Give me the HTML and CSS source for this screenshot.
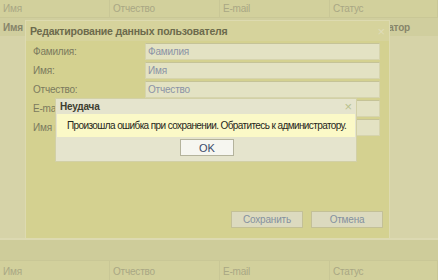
FILE: index.html
```html
<!DOCTYPE html>
<html lang="ru">
<head>
  <meta charset="UTF-8">
  <meta name="viewport" content="width=device-width, initial-scale=1.0">
  <link rel="stylesheet" href="styles.css">
</head>
<body>

<!-- таблица под окнами -->
<div class="page">
  <div class="grid-head">
    <div class="cell">Имя</div>
    <div class="cell">Отчество</div>
    <div class="cell">E-mail</div>
    <div class="cell">Статус</div>
  </div>

  <div class="panel">
    <div class="panel-head">
      <span>Имя</span>
      <span>Администратор</span>
    </div>
    <div class="panel-body"></div>
  </div>

  <div class="band"></div>

  <div class="grid-head bottom">
    <div class="cell">Имя</div>
    <div class="cell">Отчество</div>
    <div class="cell">E-mail</div>
    <div class="cell">Статус</div>
  </div>
</div>

<!-- окно редактирования -->
<div class="dialog">
  <div class="dialog-title">
    <span>Редактирование данных пользователя</span>
    <span class="close">&times;</span>
  </div>
  <div class="form">
    <label>Фамилия:</label><div class="input">Фамилия</div>
    <label>Имя:</label><div class="input">Имя</div>
    <label>Отчество:</label><div class="input">Отчество</div>
    <label>E-mail:</label><div class="input"></div>
    <label>Имя пользователя:</label><div class="input"></div>
  </div>
  <div class="dialog-buttons">
    <button class="btn">Сохранить</button>
    <button class="btn">Отмена</button>
  </div>
</div>

<!-- сообщение об ошибке -->
<div class="alert">
  <div class="alert-title">
    <span>Неудача</span>
    <span class="alert-close">&times;</span>
  </div>
  <div class="alert-msg">Произошла ошибка при сохранении. Обратитесь к администратору.</div>
  <div class="alert-buttons">
    <button class="ok">OK</button>
  </div>
</div>

</body>
</html>
```

FILE: styles.css
```css
body {
  margin: 0;
  background: #d2d09e;
  font-family: "Liberation Sans", Arial, sans-serif;
  font-size: 10px;
  letter-spacing: -0.2px;
  overflow: hidden;
}

.page {
  width: 438px;
  height: 280px;
  display: flex;
  flex-direction: column;
}

.grid-head {
  display: grid;
  grid-template-columns: 110px 110px 110px 108px;
  height: 17px;
  background: #d2d09c;
  border-bottom: 1px solid #c9c796;
  flex-shrink: 0;
}

.grid-head .cell {
  padding: 3px 0 0 3px;
  color: #a9a784;
  border-right: 1px solid #c9c796;
}

.grid-head.bottom {
  border-top: 1px solid #c9c796;
  border-bottom: none;
  height: 19px;
}

.grid-head.bottom .cell {
  padding-top: 5px;
}

.panel {
  height: 220px;
  background: #d6d3a8;
  display: flex;
  flex-direction: column;
  border-bottom: 2px solid #dcd9b2;
}

.panel-head {
  height: 18px;
  display: flex;
  justify-content: space-between;
  padding: 4px 28px 0 3px;
  box-sizing: border-box;
  font-weight: bold;
  color: #87856a;
  background: #d0ce9e;
}

.band {
  flex: 1;
  background: #cecc9a;
}

/* окно редактирования */
.dialog {
  position: absolute;
  left: 25px;
  top: 20px;
  width: 365px;
  height: 219px;
  box-sizing: border-box;
  background: #d4d190;
  border: 1px solid #dddab0;
  display: flex;
  flex-direction: column;
}

.dialog-title {
  height: 20px;
  display: flex;
  justify-content: space-between;
  align-items: center;
  padding: 0 4px 0 4px;
  background: #d6d39c;
  font-weight: bold;
  font-size: 10.5px;
  color: #6c6a4c;
}

.close {
  font-weight: normal;
  font-size: 13px;
  color: #dfdcb8;
}

.form {
  display: grid;
  grid-template-columns: 112px 235px;
  row-gap: 2px;
  padding: 2px 0 0 7px;
  align-items: center;
}

.form label {
  color: #7b7a5e;
  white-space: nowrap;
  overflow: hidden;
}

.input {
  height: 17px;
  box-sizing: border-box;
  background: #e3e2c3;
  border: 1px solid #d6d4ad;
  border-top-color: #c5c397;
  padding: 2px 0 0 2px;
  color: #8b93a6;
}

.dialog-buttons {
  margin-top: auto;
  display: flex;
  justify-content: flex-end;
  gap: 8px;
  padding: 0 6px 10px 0;
}

.btn {
  width: 72px;
  height: 17px;
  padding: 0;
  background: #dcdabf;
  border: 1px solid #c3c097;
  font-family: inherit;
  font-size: 10px;
  letter-spacing: -0.2px;
  color: #8591a0;
}

/* сообщение об ошибке */
.alert {
  position: absolute;
  left: 55px;
  top: 98px;
  width: 302px;
  height: 64px;
  box-sizing: border-box;
  background: #e5e4cd;
  border: 1px solid #d2d0a6;
  display: flex;
  flex-direction: column;
}

.alert-title {
  height: 15px;
  display: flex;
  justify-content: space-between;
  align-items: center;
  padding: 0 4px;
  font-weight: bold;
  color: #3e3e30;
}

.alert-close {
  font-weight: normal;
  font-size: 13px;
  color: #b9c28f;
}

.alert-msg {
  margin: 0 1px;
  height: 23px;
  line-height: 23px;
  padding-left: 10px;
  background: #fbf9c7;
  color: #262620;
  white-space: nowrap;
  letter-spacing: -0.6px;
}

.alert-buttons {
  display: flex;
  padding: 2px 0 0 124px;
}

.ok {
  width: 54px;
  height: 17px;
  padding: 0;
  background: #f6f6f0;
  border: 1px solid #b4b39c;
  font-family: inherit;
  font-size: 11px;
  color: #3a4a6a;
}
```
